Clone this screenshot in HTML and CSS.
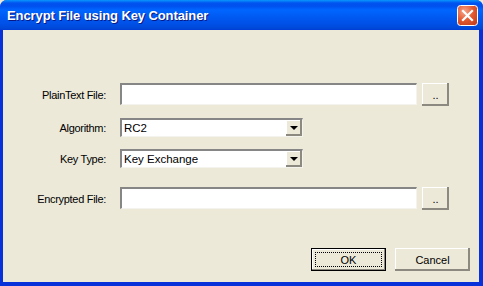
FILE: index.html
```html
<!DOCTYPE html>
<html>
<head>
<meta charset="utf-8">
<link rel="stylesheet" href="styles.css">
</head>
<body>
<div class="window">
  <div class="titlebar">
    <span class="title">Encrypt File using Key Container</span>
    <div class="close">
      <svg width="21" height="21" viewBox="0 0 21 21">
        <defs>
          <radialGradient id="rg" cx="0.35" cy="0.3" r="0.9">
            <stop offset="0" stop-color="#f6a58a"/>
            <stop offset="0.5" stop-color="#e2582f"/>
            <stop offset="1" stop-color="#c03a18"/>
          </radialGradient>
        </defs>
        <rect x="0.5" y="0.5" width="20" height="20" rx="3" fill="url(#rg)" stroke="#fff"/>
        <path d="M6 6 L15 15 M15 6 L6 15" stroke="#fff" stroke-width="2.2" stroke-linecap="square"/>
      </svg>
    </div>
  </div>
  <div class="client">
    <div class="form">
      <div class="row row-file">
        <label class="lbl">PlainText File:</label>
        <div class="textbox"></div>
        <button class="btn btn-browse">..</button>
      </div>
      <div class="row row-combo">
        <label class="lbl">Algorithm:</label>
        <div class="combo"><span class="combo-text">RC2</span><span class="drop"><span class="tri"></span></span></div>
      </div>
      <div class="row row-combo">
        <label class="lbl">Key Type:</label>
        <div class="combo"><span class="combo-text">Key Exchange</span><span class="drop"><span class="tri"></span></span></div>
      </div>
      <div class="row row-file row-last">
        <label class="lbl">Encrypted File:</label>
        <div class="textbox"></div>
        <button class="btn btn-browse">..</button>
      </div>
    </div>
    <div class="actions">
      <button class="btn btn-default"><span class="focus">OK</span></button>
      <button class="btn btn-action">Cancel</button>
    </div>
  </div>
</div>
</body>
</html>
```

FILE: styles.css
```css
html, body {
  margin: 0;
  padding: 0;
  width: 483px;
  height: 286px;
  overflow: hidden;
  background: #ece9d8;
}
.window {
  width: 483px;
  height: 286px;
  display: flex;
  flex-direction: column;
  box-sizing: border-box;
  background: #0831d9;
  border-radius: 7px 7px 0 0;
  overflow: hidden;
}
.titlebar {
  height: 30px;
  flex: none;
  display: flex;
  align-items: center;
  justify-content: space-between;
  padding: 0 5px 0 7px;
  background: linear-gradient(to bottom, #0997ff 0px, #0053ee 3px, #0050ee 6px, #0066ff 10px, #0058f0 18px, #0050e6 24px, #0049d8 28px, #003dd7 30px);
  box-sizing: border-box;
}
.title {
  color: #fff;
  font-family: "Liberation Sans", Arial, sans-serif;
  font-weight: bold;
  font-size: 13px;
  letter-spacing: -0.1px;
  text-shadow: 1px 1px 0 #0a1883;
  margin-top: 1px;
}
.close {
  width: 21px;
  height: 21px;
  display: flex;
}
.client {
  flex: 1;
  margin: 0 4px 4px 3px;
  background: #ece9d8;
  display: flex;
  flex-direction: column;
  font-family: "Liberation Sans", Arial, sans-serif;
  font-size: 11px;
  color: #000;
}
.form {
  padding-top: 53px;
  display: flex;
  flex-direction: column;
}
.row {
  display: flex;
  align-items: center;
}
.row-file {
  height: 23px;
  margin-bottom: 12px;
}
.row-combo {
  height: 19px;
  margin-bottom: 12px;
}
.row-combo + .row-combo {
  margin-bottom: 19px;
}
.row-last {
  margin-bottom: 0;
}
.lbl {
  width: 103px;
  text-align: right;
  margin-right: 14px;
  white-space: nowrap;
  letter-spacing: -0.3px;
}
.textbox {
  width: 297px;
  height: 22px;
  box-sizing: border-box;
  background: #fff;
  border-top: 2px solid #868686;
  border-left: 2px solid #868686;
  border-right: 1px solid #f4f3ee;
  border-bottom: 1px solid #f4f3ee;
  align-self: flex-start;
}
.btn {
  font-family: "Liberation Sans", Arial, sans-serif;
  font-size: 11px;
  color: #000;
  background: #ece9d8;
  box-sizing: border-box;
  padding: 0;
  margin: 0;
  border: none;
}
.btn-browse {
  width: 27px;
  height: 23px;
  margin-left: 5px;
  line-height: 20px;
  padding-top: 1px;
  box-shadow: inset -2px -2px 0 #8c8a80, inset 1px 1px 0 #fff;
}
.combo {
  width: 183px;
  height: 19px;
  box-sizing: border-box;
  background: #fff;
  border-top: 2px solid #868686;
  border-left: 2px solid #868686;
  border-right: 1px solid #f4f3ee;
  border-bottom: 1px solid #f4f3ee;
  display: flex;
  align-items: center;
  justify-content: space-between;
}
.combo-text {
  padding-left: 2px;
  line-height: 16px;
  font-size: 11.5px;
}
.drop {
  width: 16px;
  height: 16px;
  box-sizing: border-box;
  background: #ece9d8;
  box-shadow: inset -2px -2px 0 #8c8a80, inset 1px 1px 0 #fff;
  display: flex;
  align-items: center;
  justify-content: center;
}
.tri {
  width: 0;
  height: 0;
  border-left: 4px solid transparent;
  border-right: 4px solid transparent;
  border-top: 4px solid #000;
  margin-right: 1px;
}
.actions {
  margin-top: auto;
  margin-bottom: 11px;
  display: flex;
  justify-content: flex-end;
  gap: 9px;
  padding-right: 9px;
}
.btn-default {
  width: 75px;
  height: 23px;
  border: 1px solid #000;
  box-shadow: inset -1px -1px 0 #8c8a80, inset 1px 1px 0 #fff;
  display: flex;
  align-items: center;
  justify-content: center;
  padding: 3px;
}
.focus {
  width: 100%;
  height: 100%;
  box-sizing: border-box;
  border: 1px dotted #000;
  display: flex;
  align-items: center;
  justify-content: center;
}
.btn-action {
  width: 75px;
  height: 23px;
  box-shadow: inset -2px -2px 0 #8c8a80, inset 1px 1px 0 #fff;
}
```
